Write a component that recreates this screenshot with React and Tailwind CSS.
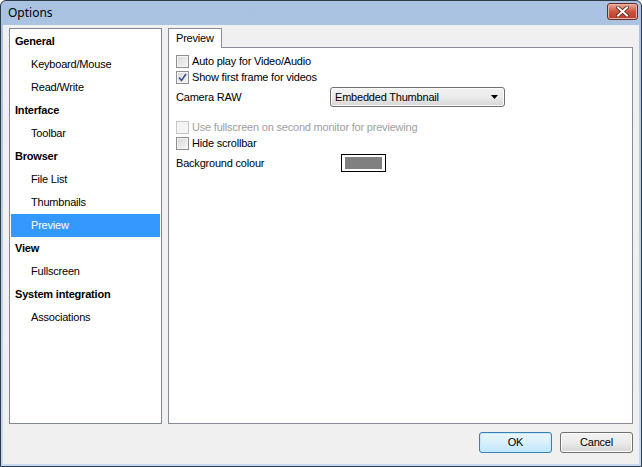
import React from 'react';

const font = { fontFamily: '"Liberation Sans", Arial, sans-serif' };

const tree = [
  { label: 'General', head: true },
  { label: 'Keyboard/Mouse' },
  { label: 'Read/Write' },
  { label: 'Interface', head: true },
  { label: 'Toolbar' },
  { label: 'Browser', head: true },
  { label: 'File List' },
  { label: 'Thumbnails' },
  { label: 'Preview', selected: true },
  { label: 'View', head: true },
  { label: 'Fullscreen' },
  { label: 'System integration', head: true },
  { label: 'Associations' },
];

const CheckBox = ({ label, checked, disabled }) => (
  <div className="flex items-center h-[16px]">
    <div
      className={`w-[13px] h-[13px] border flex items-center justify-center ${
        disabled
          ? 'border-[#c6c6c6] bg-[#f4f4f4]'
          : 'border-[#8e8f8f] bg-gradient-to-br from-[#d8d8d8] to-[#f7f7f7] shadow-[inset_0_0_0_1px_#f4f4f4]'
      }`}
    >
      {checked && (
        <svg width="9" height="9" viewBox="0 0 9 9">
          <path d="M1 4.5 L3.5 7.5 L8 1" fill="none" stroke="#3d5390" strokeWidth="1.6" />
        </svg>
      )}
    </div>
    <span className={`ml-[3px] ${disabled ? 'text-[#a0a0a0]' : 'text-black'}`}>{label}</span>
  </div>
);

const Button = ({ children, primary }) => (
  <div
    className={`w-[73px] h-[21px] rounded-[3px] border flex items-center justify-center text-black ${
      primary
        ? 'border-[#3c7fb1] bg-gradient-to-b from-[#eaf6fd] via-[#d9f0fc] to-[#bee6fd] shadow-[inset_0_0_0_1px_#c5eaf9]'
        : 'border-[#707070] bg-gradient-to-b from-[#f2f2f2] via-[#ebebeb] to-[#d5d5d5] shadow-[inset_0_0_0_1px_#fcfcfc]'
    }`}
  >
    {children}
  </div>
);

export default function App() {
  return (
    <div
      className="w-[642px] h-[467px] border border-[#2d3a4a] rounded-t-[6px] bg-gradient-to-b from-[#a9c2e1] to-[#c6daf1] flex flex-col text-[11px] tracking-[-0.2px]"
      style={font}
    >
      {/* title bar */}
      <div className="h-[24px] flex items-center justify-between pl-[7px] pr-[3px]">
        <span className="text-[12px] text-black tracking-normal" style={{ fontFamily: '"Noto Sans", "Open Sans", sans-serif' }}>
          Options
        </span>
        <div className="w-[31px] h-[17px] mt-[-3px] rounded-[3px] border border-[#6a2a24] bg-gradient-to-b from-[#e9ad9d] via-[#cc5540] to-[#b93c2a] flex items-center justify-center shadow-[inset_0_0_0_1px_#e8b4a6]">
          <svg width="13" height="11" viewBox="0 0 13 11">
            <path d="M2 1.5 L11 9.5 M11 1.5 L2 9.5" stroke="#5a1e16" strokeWidth="3.6" strokeLinecap="square" />
            <path d="M2 1.5 L11 9.5 M11 1.5 L2 9.5" stroke="#ffffff" strokeWidth="2" strokeLinecap="square" />
          </svg>
        </div>
      </div>

      {/* client area */}
      <div className="flex-1 mx-[2px] mb-[2px] bg-[#f0f0f0] flex flex-col pt-[3px] px-[6px] pb-[10px]">
        <div className="flex gap-[6px] h-[396px]">
          {/* tree */}
          <div className="w-[153px] h-full border border-[#828790] bg-white p-[1px]">
            {tree.map((item) => (
              <div
                key={item.label}
                className={`h-[23px] flex items-center ${item.head ? 'pl-[4px] font-bold' : 'pl-[20px]'} ${
                  item.selected ? 'bg-[#3399ff] text-white' : 'text-black'
                }`}
              >
                {item.label}
              </div>
            ))}
          </div>

          {/* tab control */}
          <div className="flex-1 flex flex-col">
            <div className="flex">
              <div className="relative z-10 w-[54px] h-[20px] -mb-px border border-b-0 border-[#898c95] bg-white flex items-center pl-[7px] text-black">
                Preview
              </div>
            </div>
            <div className="flex-1 border border-[#898c95] bg-white pt-[5px] pl-[7px] flex flex-col">
              <CheckBox label="Auto play for Video/Audio" />
              <CheckBox label="Show first frame for videos" checked />
              <div className="flex items-center h-[20px] mt-[2px]">
                <span className="w-[154px] text-black">Camera RAW</span>
                <div className="w-[175px] h-[20px] rounded-[3px] border border-[#707070] bg-gradient-to-b from-[#f2f2f2] via-[#ebebeb] to-[#d6d6d6] shadow-[inset_0_0_0_1px_#fbfbfb] flex items-center justify-between pl-[4px] pr-[6px] text-black">
                  <span>Embedded Thumbnail</span>
                  <svg width="7" height="4" viewBox="0 0 7 4">
                    <path d="M0 0 L7 0 L3.5 4 Z" fill="#000" />
                  </svg>
                </div>
              </div>
              <div className="mt-[12px]">
                <CheckBox label="Use fullscreen on second monitor for previewing" disabled />
              </div>
              <CheckBox label="Hide scrollbar" />
              <div className="flex items-center h-[18px] mt-[3px]">
                <span className="w-[165px] text-black">Background colour</span>
                <div className="w-[45px] h-[18px] border border-black bg-white py-[2px] px-[3px]">
                  <div className="w-full h-full bg-[#808080]" />
                </div>
              </div>
            </div>
          </div>
        </div>

        {/* buttons */}
        <div className="flex justify-end gap-[8px] mt-[8px]">
          <Button primary>OK</Button>
          <Button>Cancel</Button>
        </div>
      </div>
    </div>
  );
}
